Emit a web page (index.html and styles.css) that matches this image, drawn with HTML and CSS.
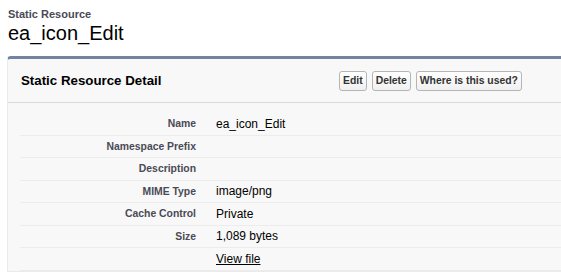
FILE: index.html
```html
<!DOCTYPE html>
<html lang="en">
<head>
    <meta charset="UTF-8">
    <title>Static Resource: ea_icon_Edit</title>
    <link rel="stylesheet" href="styles.css">
</head>
<body>
    <div class="page-head">
        <div class="page-type">Static Resource</div>
        <h1 class="page-title">ea_icon_Edit</h1>
    </div>

    <div class="detail">
        <div class="detail-head">
            <h2>Static Resource Detail</h2>
            <div class="buttons">
                <button class="btn">Edit</button>
                <button class="btn">Delete</button>
                <button class="btn">Where is this used?</button>
            </div>
        </div>

        <table class="detail-list">
            <tr><td class="label">Name</td><td class="value">ea_icon_Edit</td></tr>
            <tr><td class="label">Namespace Prefix</td><td class="value"></td></tr>
            <tr><td class="label">Description</td><td class="value"></td></tr>
            <tr><td class="label">MIME Type</td><td class="value">image/png</td></tr>
            <tr><td class="label">Cache Control</td><td class="value">Private</td></tr>
            <tr><td class="label">Size</td><td class="value">1,089 bytes</td></tr>
            <tr><td class="label"></td><td class="value"><a href="#">View file</a></td></tr>
        </table>
    </div>
</body>
</html>
```

FILE: styles.css
```css
html {
    overflow: hidden;
}
body {
    font-family: Arial, "Liberation Sans", sans-serif;
    margin: 0;
    padding: 0 0 0 7px;
    background: #fff;
    color: #000;
    width: 620px;
}
.page-head {
    padding: 8px 0 0 1px;
    height: 48px;
}
.page-type {
    font-size: 11px;
    font-weight: bold;
    color: #4a4a56;
    line-height: 13px;
}
.page-title {
    margin: 0;
    font-size: 20px;
    font-weight: normal;
    line-height: 24px;
}
.detail {
    background: #f8f8f8;
    border: 1px solid #eaeaea;
    border-top: 3px solid #7383a0;
    border-radius: 4px 0 0 0;
}
.detail-head {
    display: flex;
    align-items: center;
    height: 43px;
    padding: 0 13px;
    border-bottom: 1px solid #dbdbdb;
}
.detail-head h2 {
    margin: 0;
    font-size: 13.3px;
    font-weight: bold;
    width: 318px;
}
.buttons {
    display: flex;
    gap: 5px;
}
.btn {
    font-family: Arial, "Liberation Sans", sans-serif;
    font-size: 10.4px;
    font-weight: bold;
    color: #333;
    background: linear-gradient(#fff, #f0f0f0);
    border: 1px solid #b5b5b5;
    border-radius: 3px;
    padding: 3px 3px;
    line-height: 12px;
}
.detail-list {
    border-collapse: collapse;
    margin: 10px 0 0 12px;
    width: 580px;
}
.detail-list td {
    height: 21.5px;
    border-bottom: 1px solid #ececec;
    padding: 0 10px;
}
.label {
    width: 166px;
    text-align: right;
    font-size: 10.4px;
    font-weight: bold;
    color: #4a4a56;
}
.value {
    font-size: 12px;
    color: #000;
}
.value a {
    color: #000;
}
```
